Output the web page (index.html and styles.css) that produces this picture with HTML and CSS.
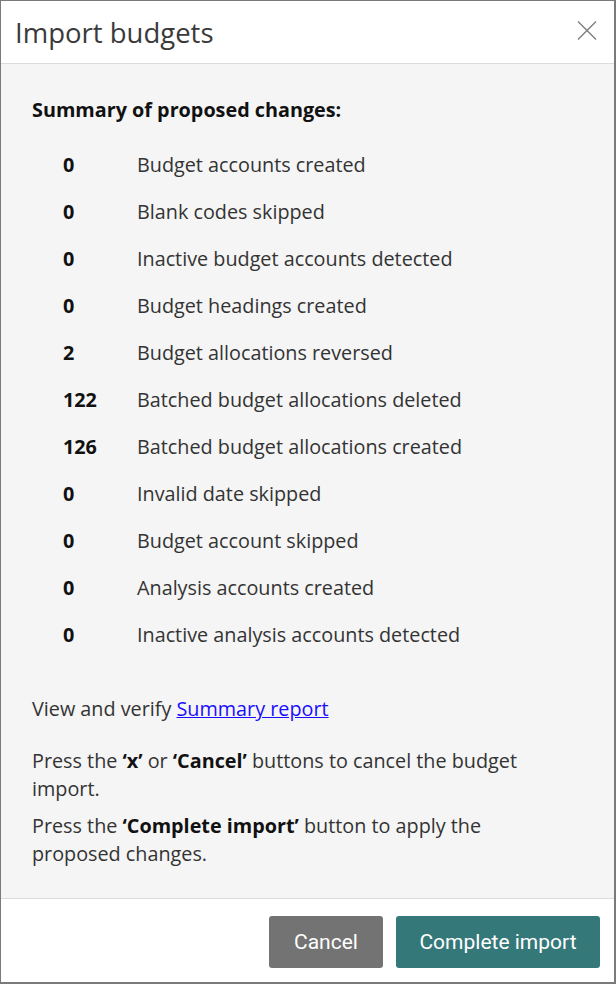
FILE: index.html
```html
<!DOCTYPE html>
<html lang="en">
<head>
    <meta charset="UTF-8">
    <meta name="viewport" content="width=device-width, initial-scale=1.0">
    <title>Import budgets</title>
    <link rel="stylesheet" href="styles.css">
</head>
<body>
    <div class="dialog">
        <header class="dialog-header">
            <h1>Import budgets</h1>
            <button class="close" aria-label="Close">
                <svg width="20" height="19" viewBox="0 0 20 19"><path d="M1 0.5 L19 18.5 M19 0.5 L1 18.5" stroke="#7d7d7d" stroke-width="1.4" fill="none"/></svg>
            </button>
        </header>
        <main class="dialog-body">
            <h2>Summary of proposed changes:</h2>
            <div class="summary">
                <span class="count">0</span><span>Budget accounts created</span>
                <span class="count">0</span><span>Blank codes skipped</span>
                <span class="count">0</span><span>Inactive budget accounts detected</span>
                <span class="count">0</span><span>Budget headings created</span>
                <span class="count">2</span><span>Budget allocations reversed</span>
                <span class="count">122</span><span>Batched budget allocations deleted</span>
                <span class="count">126</span><span>Batched budget allocations created</span>
                <span class="count">0</span><span>Invalid date skipped</span>
                <span class="count">0</span><span>Budget account skipped</span>
                <span class="count">0</span><span>Analysis accounts created</span>
                <span class="count">0</span><span>Inactive analysis accounts detected</span>
            </div>
            <p class="verify">View and verify <a href="#">Summary report</a></p>
            <p>Press the <b>&lsquo;x&rsquo;</b> or <b>&lsquo;Cancel&rsquo;</b> buttons to cancel the budget import.</p>
            <p>Press the <b>&lsquo;Complete import&rsquo;</b> button to apply the proposed changes.</p>
        </main>
        <footer class="dialog-footer">
            <button class="btn btn-cancel">Cancel</button>
            <button class="btn btn-primary">Complete import</button>
        </footer>
    </div>
</body>
</html>
```

FILE: styles.css
```css
body {
    margin: 0;
    font-family: "Open Sans", "Noto Sans", sans-serif;
    color: #333;
}
.dialog {
    width: 616px;
    height: 984px;
    box-sizing: border-box;
    border: 1px solid #7a7a7a;
    border-right-width: 2px;
    border-bottom-width: 2px;
    display: flex;
    flex-direction: column;
    background: white;
}
.dialog-header {
    height: 63px;
    box-sizing: border-box;
    padding: 0 17px 0 14px;
    display: flex;
    align-items: center;
    justify-content: space-between;
    border-bottom: 1px solid #dcdcdc;
}
.dialog-header h1 {
    margin: 0;
    font-weight: normal;
    font-size: 27.5px;
    color: #3a3a3a;
}
.close {
    border: none;
    background: none;
    padding: 0;
    display: flex;
    margin-top: -4px;
}
.dialog-body {
    flex: 1;
    background: #f5f5f5;
    padding: 32px 31px 0 31px;
    font-size: 19.8px;
}
.dialog-body h2 {
    margin: 0 0 27px 0;
    font-size: 19.8px;
    line-height: 28px;
    font-weight: bold;
    color: #111;
}
.summary {
    display: grid;
    grid-template-columns: 74px 1fr;
    grid-auto-rows: 47px;
    padding-left: 31px;
    line-height: 28px;
    margin-bottom: 27px;
}
.count {
    font-weight: bold;
    color: #111;
}
.dialog-body p {
    margin: 0 0 9px 0;
    line-height: 28px;
    max-width: 510px;
}
.dialog-body p.verify {
    margin-bottom: 24px;
}
.dialog-body b {
    color: #111;
}
a {
    color: #1a0dff;
}
.dialog-footer {
    border-top: 1px solid #dcdcdc;
    padding: 17px 14px 14px 0;
    display: flex;
    justify-content: flex-end;
    gap: 13px;
}
.btn {
    height: 52px;
    border: none;
    border-radius: 3px;
    color: white;
    font-family: Roboto, sans-serif;
    font-size: 21px;
    padding: 0;
}
.btn-cancel {
    background: #737373;
    width: 114px;
}
.btn-primary {
    background: #35787a;
    width: 204px;
}
```
